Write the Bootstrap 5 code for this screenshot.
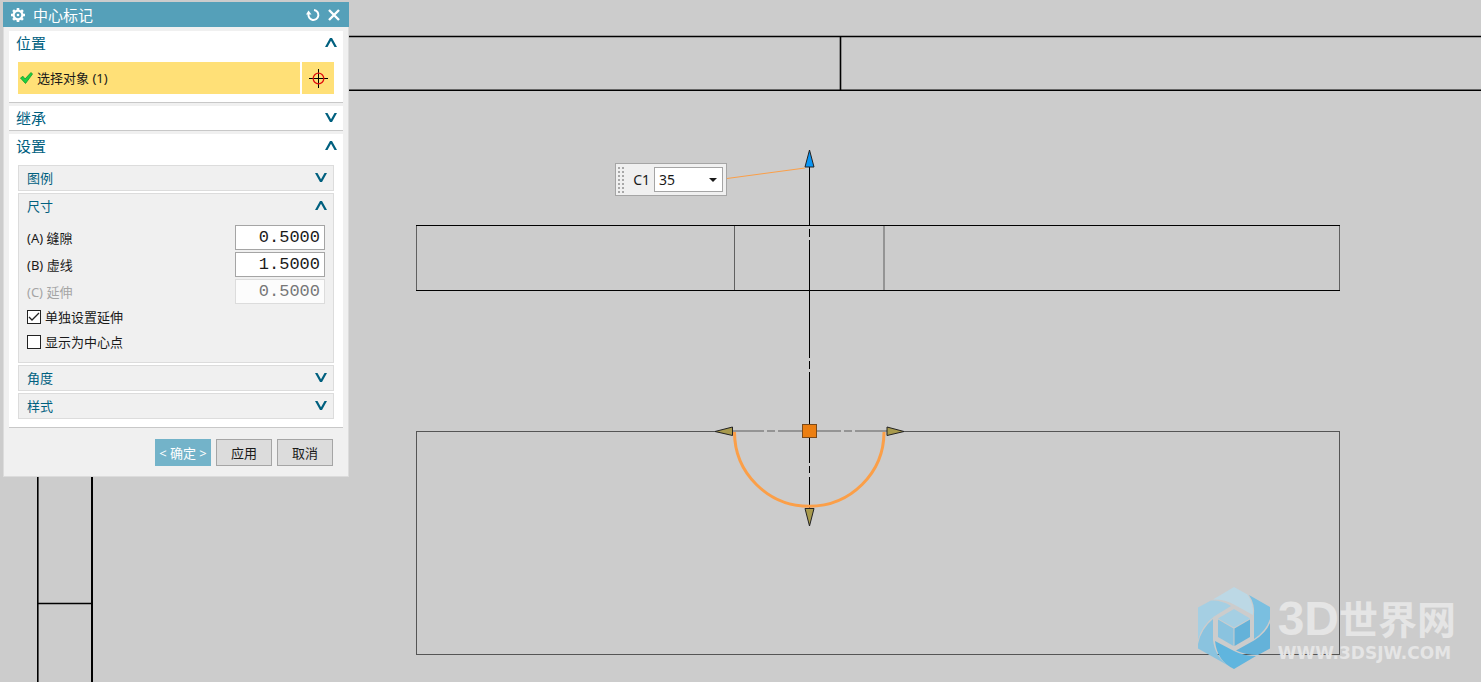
<!DOCTYPE html>
<html lang="zh-CN">
<head>
<meta charset="utf-8">
<meta name="viewport" content="width=device-width, initial-scale=1">
<title>中心标记</title>
<link href="https://cdn.jsdelivr.net/npm/bootstrap@5.3.0/dist/css/bootstrap.min.css" rel="stylesheet">
<style>
  body { font-family: "Noto Sans", "Noto Sans CJK SC", sans-serif; font-size: 13px; line-height: 18px; color: #1a1a1a; background: #ccc; }
  .workspace { min-height: 100vh; padding: 2px 3px; }
  .drawing { z-index: 0; }
  .dialog-box { width: 346px; background: #f0f0f0; border: 1px solid #dcdcdc; border-top: 0; z-index: 1; }
  .dialog-title { height: 25px; margin: 0 -1px; padding: 0 9px 0 8px; background: #55a0b9; color: #fff; font-size: 15px; }
  .dialog-title h1 { font: inherit; margin: 0; }
  .tool-btn { border: 0; background: none; padding: 0; color: inherit; display: flex; }
  .groups { gap: 3px; padding: 4px 5px 0; }
  .group-box { background: #fff; border-bottom: 1px solid #c8c8c8; }
  .group-head { width: 100%; height: 24px; padding: 0 6px 0 7px; border: 0; background: none; color: #00607f; font-size: 15px; }
  .sub-box { border: 1px solid #dcdcdc; background: #f0f0f0; }
  .sub-head { width: 100%; height: 24px; padding: 0 6px 0 8px; border: 0; background: none; color: #00607f; }
  .group-head svg, .sub-head svg { margin-bottom: 1px; }
  .pick-row { gap: 2px; padding: 7px 9px 8px; }
  .pick { height: 32px; padding: 0 2px; border: 0; background: #ffe077; color: #1a1a1a; }
  .pick-point { width: 32px; }
  .sub-list { gap: 2px; padding: 7px 9px 8px; }
  .sizes { gap: 2px; padding: 7px 8px 0; }
  .ticks { gap: 7px; padding: 4px 8px 11px; }
  .off-label { color: #a5a5a5; }
  .num-field { width: 90px; height: 25px; padding: 0 4px; border: 1px solid #a5a5a5; background: #fff; color: #1a1a1a; font: 17px "Liberation Mono", monospace; text-align: right; }
  .num-field:disabled { border-color: #dcdcdc; background: #fcfcfc; color: #777; }
  .tick { appearance: none; width: 14px; height: 14px; margin: 0; border: 1px solid #222; background: #fff; }
  .tick:checked { background: #fff url("data:image/svg+xml,%3Csvg xmlns='http://www.w3.org/2000/svg' viewBox='0 0 12 12'%3E%3Cpath d='M1 6l3 3 7-7' fill='none' stroke='%23222' stroke-width='1.3'/%3E%3C/svg%3E"); }
  .actions { gap: 5px; padding: 11px 15px 10px; }
  .act { width: 56px; height: 27px; padding: 0; border: 1px solid #a5a5a5; border-radius: 0; background: #dcdcdc; color: #1a1a1a; font-size: 13px; line-height: 18px; white-space: nowrap; }
  .act-main { background: #73b3c9; border-color: #73b3c9; color: #fff; }
  .length-box { left: 615px; top: 163px; width: 112px; height: 33px; padding: 0 3px 0 2px; background: #f0f0f0; border: 1px solid #a5a5a5; font-size: 14px; }
  .grip { width: 7px; height: 28px; }
  .length-pick { appearance: none; width: 69px; height: 25px; padding: 0 4px; border: 1px solid #a5a5a5; border-radius: 0; color: #1a1a1a; background: #fff url("data:image/svg+xml,%3Csvg xmlns='http://www.w3.org/2000/svg' width='8' height='4'%3E%3Cpath d='M0 0h8L4 4z' fill='%231a1a1a'/%3E%3C/svg%3E") no-repeat right 5px center; }
  .site-mark { right: 25px; bottom: 13px; gap: 8px; color: #e5e5e5; }
  .site-text { padding-top: 4px; }
  .site-name { font: bold 39px/39px "Noto Sans CJK SC", sans-serif; }
  .site-digits { font: bold 48px/42px "Liberation Sans", sans-serif; }
  .site-url { margin-top: 4px; font: bold 17px/18px "DejaVu Sans", sans-serif; }
  .site-cjk { padding-bottom: 3px; }
</style>
</head>
<body>
<svg width="0" height="0" class="position-absolute" aria-hidden="true">
  <symbol id="up" viewBox="0 0 12 9"><path d="M0 9 5 0h2l5 9H9.500L6 2.800 2.500 9z" fill="#00607f"/></symbol>
  <symbol id="down" viewBox="0 0 12 9"><path d="M0 0 5 9h2l5-9H9.500L6 6.200 2.500 0z" fill="#00607f"/></symbol>
</svg>
<main class="workspace position-relative overflow-hidden">
  <svg class="drawing position-absolute top-0 start-0 w-100 h-100" fill="none" aria-hidden="true">
    <g stroke="#000" stroke-width="1.600">
      <path d="M37 36.500H4000M37 90.300H4000M840.500 36V91M37.800 36V2000M37 603.500H92"/>
      <path d="M92 90V2000" stroke-width="2"/>
    </g>
    <g stroke="#000">
      <path d="M416 225.500H1340M416 290.500H1340"/>
      <path d="M416.500 226V290M1339.500 226V290M734.500 226V290" stroke="#606060"/>
      <path d="M884 226V290" stroke="#949494" stroke-width="2"/>
      <path d="M416 431.500H715M904 431.500H1340M416.500 431V655M416 654.500H1340M1339.500 431V655" stroke="#555"/>
      <path d="M809.500 167V225M809.500 229V237M809.500 240V358M809.500 361V369M809.500 372V463M809.500 466V473M809.500 477V508"/>
      <path d="M732 431H764M767 431H775M778 431H841M844 431H852M855 431H887" stroke="#949494" stroke-width="2"/>
    </g>
    <path d="M734.500 432A74.500 74 0 0 0 884 432" stroke="#fb9f48" stroke-width="3"/>
    <path d="M727 178.500 805 168" stroke="#fb9f48"/>
    <g stroke="#222" stroke-width="1">
      <path d="M809.500 150 805 167H814z" fill="#0a96f5"/>
      <path d="M715 431.500 732.500 427V435.500zM904 431.500 887 427V435.500zM809.500 526 805 508.500H814z" fill="#a89a4d"/>
      <rect x="802.500" y="424.500" width="14" height="13" fill="#ec7f12" stroke="#7b4a1a"/>
    </g>
  </svg>

  <section class="dialog-box position-relative" aria-labelledby="dlg-title">
    <header class="dialog-title d-flex align-items-center">
      <svg class="me-2" width="14" height="14" viewBox="-7 -7 14 14" aria-hidden="true"><g stroke="#fff" fill="none"><circle r="4.400" stroke-width="2.200"/><path d="M0-7V-5M0 7V5M-7 0H-5M7 0H5M-4.900-4.900-3.700-3.700M4.900-4.900 3.700-3.700M-4.900 4.900-3.700 3.700M4.900 4.900 3.700 3.700" stroke-width="2.600"/></g><circle r="1.300" fill="#fff"/></svg>
      <h1 id="dlg-title" class="flex-grow-1">中心标记</h1>
      <button class="tool-btn me-2" type="button" aria-label="重置"><svg width="14" height="14" viewBox="0 0 14 14"><path d="M8 2A5 5 0 1 1 2.500 6" fill="none" stroke="#fff" stroke-width="2"/><path d="M0 6.500 2.500 2.500 5.500 6.500z" fill="#fff"/></svg></button>
      <button class="tool-btn" type="button" aria-label="关闭"><svg width="12" height="12" viewBox="0 0 12 12"><path d="M1 1 11 11M11 1 1 11" stroke="#fff" stroke-width="2.400"/></svg></button>
    </header>

    <div class="groups d-grid">
      <div class="group-box">
        <button class="group-head d-flex align-items-center justify-content-between" type="button" aria-expanded="true">位置<svg width="12" height="9"><use href="#up"/></svg></button>
        <div class="d-flex pick-row">
          <button class="pick flex-grow-1 d-flex align-items-center text-start" type="button"><svg class="me-1" width="13" height="12" viewBox="0 0 13 12" aria-hidden="true"><path d="M.5 6 3 4.300 5 7 11 .5 12.500 2 5.500 11.500z" fill="#1ed040" stroke="#129a2c" stroke-width=".8"/></svg>选择对象 (1)</button>
          <button class="pick pick-point d-flex align-items-center justify-content-center" type="button" aria-label="指定点"><svg width="19" height="19" viewBox="0 0 19 19" fill="none"><path d="M0 9.500H19M9.500 0V19" stroke="#000"/><circle cx="9.500" cy="9.500" r="5.300" stroke="#e01010" stroke-width="1.300"/></svg></button>
        </div>
      </div>

      <div class="group-box">
        <button class="group-head d-flex align-items-center justify-content-between" type="button" aria-expanded="false">继承<svg width="12" height="9"><use href="#down"/></svg></button>
      </div>

      <div class="group-box">
        <button class="group-head d-flex align-items-center justify-content-between" type="button" aria-expanded="true">设置<svg width="12" height="9"><use href="#up"/></svg></button>
        <div class="sub-list d-grid">
          <div class="sub-box"><button class="sub-head d-flex align-items-center justify-content-between" type="button" aria-expanded="false">图例<svg width="12" height="9"><use href="#down"/></svg></button></div>
          <div class="sub-box">
            <button class="sub-head d-flex align-items-center justify-content-between" type="button" aria-expanded="true">尺寸<svg width="12" height="9"><use href="#up"/></svg></button>
            <div class="sizes d-grid">
              <div class="d-flex align-items-center justify-content-between"><label for="gap-a">(A) 缝隙</label><input class="num-field" id="gap-a" type="text" value="0.5000"></div>
              <div class="d-flex align-items-center justify-content-between"><label for="dash-b">(B) 虚线</label><input class="num-field" id="dash-b" type="text" value="1.5000"></div>
              <div class="d-flex align-items-center justify-content-between"><label for="ext-c" class="off-label">(C) 延伸</label><input class="num-field" id="ext-c" type="text" value="0.5000" disabled></div>
            </div>
            <div class="ticks d-grid">
              <div class="d-flex align-items-center gap-1"><input class="tick" type="checkbox" id="solo" checked><label for="solo">单独设置延伸</label></div>
              <div class="d-flex align-items-center gap-1"><input class="tick" type="checkbox" id="as-point"><label for="as-point">显示为中心点</label></div>
            </div>
          </div>
          <div class="sub-box"><button class="sub-head d-flex align-items-center justify-content-between" type="button" aria-expanded="false">角度<svg width="12" height="9"><use href="#down"/></svg></button></div>
          <div class="sub-box"><button class="sub-head d-flex align-items-center justify-content-between" type="button" aria-expanded="false">样式<svg width="12" height="9"><use href="#down"/></svg></button></div>
        </div>
      </div>
    </div>

    <footer class="actions d-flex justify-content-end">
      <button class="btn act act-main" type="button">&lt; 确定 &gt;</button>
      <button class="btn act" type="button">应用</button>
      <button class="btn act" type="button">取消</button>
    </footer>
  </section>

  <div class="length-box position-absolute d-flex align-items-center">
    <svg class="grip" viewBox="0 0 7 28" aria-hidden="true"><path d="M1 1V28M5 1V28" stroke="#a8a8a8" stroke-width="2" stroke-dasharray="2 2"/></svg>
    <label class="ms-auto me-1" for="c1">C1</label>
    <select class="length-pick" id="c1"><option>35</option></select>
  </div>

  <div class="site-mark position-absolute d-flex align-items-center">
    <svg width="72" height="82" viewBox="0 0 72 82" aria-hidden="true">
      <path d="M15 12.500 36 0 49.500 7.500Q56 17 55 28L36 17.500Q26 12 15 12.500z" fill="#bcd8e5"/>
      <path d="M0 20.500 13 13.500Q24 13 33 19L16 29.500Q4 38 0 53z" fill="#a5cfe3"/>
      <path d="M0 57Q3 42 15 32V53Q17 70 31 79L0 61.500z" fill="#8ac3df"/>
      <path d="M51 8 72 20V32Q68 44 56 52V28Q57 17 51 8z" fill="#7abfe0"/>
      <path d="M72 36V61.500L60 68Q48 68 38 63.500L56 53.500Q68 46 72 36z" fill="#64b2d9"/>
      <path d="M17 54 36 64Q46 69 58 69L36 82Q19 74 17 54z" fill="#60b5de"/>
      <path d="M36 22 52 31.500 36 40.500 20 31.500z" fill="#a5cfe3"/><path d="M20 32.500 35.500 41.500V59L20 50z" fill="#8ac3df"/><path d="M36.500 41.500 52 32.500V50L36.500 59z" fill="#64b2d9"/>
    </svg>
    <div class="site-text">
      <div class="site-name d-flex align-items-center"><span class="site-digits">3D</span><span class="site-cjk">世界网</span></div>
      <div class="site-url">WWW.3DSJW.COM</div>
    </div>
  </div>
</main>
<script src="https://cdn.jsdelivr.net/npm/bootstrap@5.3.0/dist/js/bootstrap.bundle.min.js"></script>
</body>
</html>
